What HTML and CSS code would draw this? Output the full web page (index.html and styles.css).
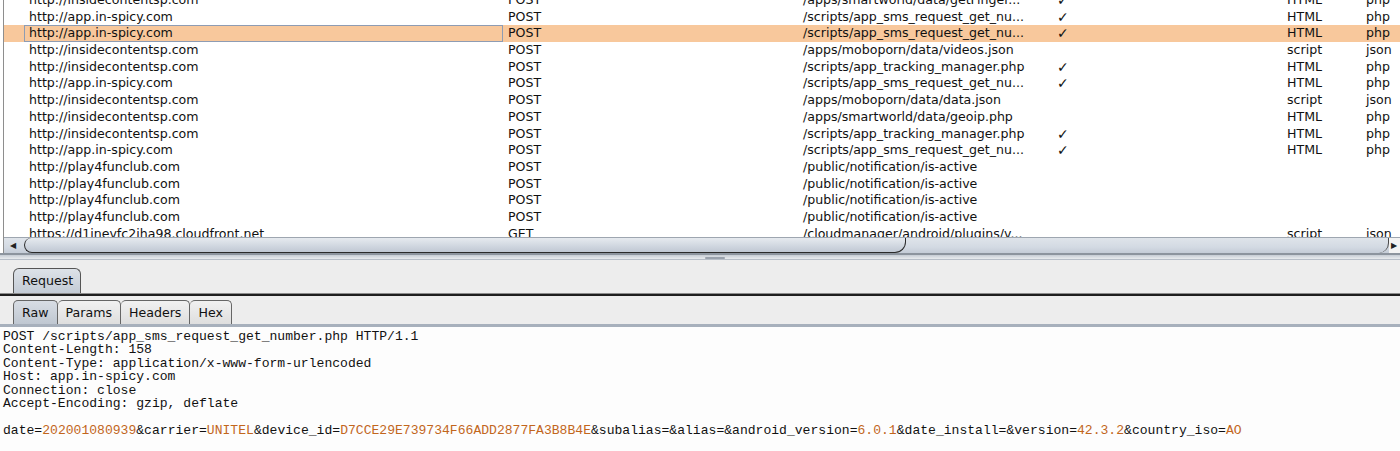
FILE: index.html
```html
<!DOCTYPE html>
<html>
<head>
<meta charset="utf-8">
<link rel="stylesheet" href="styles.css">
</head>
<body>
<div class="app">
  <div class="table-pane">
    <div class="viewport">
      <div class="rows">
        <div class="row"><span></span><span>http://insidecontentsp.com</span><span>POST</span><span>/apps/smartworld/data/getFinger...</span><span>✓</span><span>HTML</span><span>php</span></div>
        <div class="row"><span></span><span>http://app.in-spicy.com</span><span>POST</span><span>/scripts/app_sms_request_get_nu...</span><span>✓</span><span>HTML</span><span>php</span></div>
        <div class="row selected"><span></span><span class="focus">http://app.in-spicy.com</span><span>POST</span><span>/scripts/app_sms_request_get_nu...</span><span>✓</span><span>HTML</span><span>php</span></div>
        <div class="row"><span></span><span>http://insidecontentsp.com</span><span>POST</span><span>/apps/moboporn/data/videos.json</span><span></span><span>script</span><span>json</span></div>
        <div class="row"><span></span><span>http://insidecontentsp.com</span><span>POST</span><span>/scripts/app_tracking_manager.php</span><span>✓</span><span>HTML</span><span>php</span></div>
        <div class="row"><span></span><span>http://app.in-spicy.com</span><span>POST</span><span>/scripts/app_sms_request_get_nu...</span><span>✓</span><span>HTML</span><span>php</span></div>
        <div class="row"><span></span><span>http://insidecontentsp.com</span><span>POST</span><span>/apps/moboporn/data/data.json</span><span></span><span>script</span><span>json</span></div>
        <div class="row"><span></span><span>http://insidecontentsp.com</span><span>POST</span><span>/apps/smartworld/data/geoip.php</span><span></span><span>HTML</span><span>php</span></div>
        <div class="row"><span></span><span>http://insidecontentsp.com</span><span>POST</span><span>/scripts/app_tracking_manager.php</span><span>✓</span><span>HTML</span><span>php</span></div>
        <div class="row"><span></span><span>http://app.in-spicy.com</span><span>POST</span><span>/scripts/app_sms_request_get_nu...</span><span>✓</span><span>HTML</span><span>php</span></div>
        <div class="row"><span></span><span>http://play4funclub.com</span><span>POST</span><span>/public/notification/is-active</span><span></span><span></span><span></span></div>
        <div class="row"><span></span><span>http://play4funclub.com</span><span>POST</span><span>/public/notification/is-active</span><span></span><span></span><span></span></div>
        <div class="row"><span></span><span>http://play4funclub.com</span><span>POST</span><span>/public/notification/is-active</span><span></span><span></span><span></span></div>
        <div class="row"><span></span><span>http://play4funclub.com</span><span>POST</span><span>/public/notification/is-active</span><span></span><span></span><span></span></div>
        <div class="row"><span></span><span>https://d1inevfc2iha98.cloudfront.net</span><span>GET</span><span>/cloudmanager/android/plugins/v...</span><span></span><span>script</span><span>json</span></div>
      </div>
    </div>
    <div class="hscroll">
      <div class="arrow-l">◀</div>
      <div class="thumb"></div>
      <div class="track"></div>
      <div class="arrow-r">▶</div>
    </div>
  </div>
  <div class="splitter"><div class="grip"></div></div>
  <div class="lower">
    <div class="tabbar"><div class="tab selected">Request</div></div>
    <div class="subtabbar">
      <div class="subtab selected">Raw</div>
      <div class="subtab">Params</div>
      <div class="subtab">Headers</div>
      <div class="subtab">Hex</div>
    </div>
    <pre class="raw">POST /scripts/app_sms_request_get_number.php HTTP/1.1
Content-Length: 158
Content-Type: application/x-www-form-urlencoded
Host: app.in-spicy.com
Connection: close
Accept-Encoding: gzip, deflate

date=<span class="v">202001080939</span>&amp;carrier=<span class="v">UNITEL</span>&amp;device_id=<span class="v">D7CCE29E739734F66ADD2877FA3B8B4E</span>&amp;subalias=&amp;alias=&amp;android_version=<span class="v">6.0.1</span>&amp;date_install=&amp;version=<span class="v">42.3.2</span>&amp;country_iso=<span class="v">AO</span></pre>
  </div>
</div>
</body>
</html>
```

FILE: styles.css
```css
html, body {
  margin: 0;
  padding: 0;
  background: #ffffff;
}

.app {
  width: 1400px;
  height: 451px;
  overflow: hidden;
  display: flex;
  flex-direction: column;
  font-family: "DejaVu Sans", "Liberation Sans", sans-serif;
  font-size: 12.6px;
  color: #111;
}

.table-pane {
  margin-left: 3px;
  border-left: 1px solid #8e8e8e;
}

.viewport {
  height: 237px;
  overflow: hidden;
  background: #fff;
}

.rows {
  margin-top: -8px;
}

.row {
  display: grid;
  grid-template-columns: 20px 479px 295px 254px 230px 79px 1fr;
  height: 16.7px;
  line-height: 16.7px;
  white-space: nowrap;
}

.row span {
  padding-left: 5px;
  overflow: hidden;
}

.row span:nth-child(5) {
  font-size: 14px;
}

.row.selected {
  background: #f8c89c;
}

.row .focus {
  box-shadow: inset 0 0 0 1px #8e9cb3;
}

.hscroll {
  height: 15px;
  display: flex;
  align-items: stretch;
  background: linear-gradient(#dfe4ea, #d3dae3 60%, #c4ccd7);
  border-top: 1px solid #9ea6b0;
}

.arrow-l {
  width: 20px;
  font-size: 8px;
  line-height: 15px;
  padding-left: 6px;
  box-sizing: border-box;
  color: #222;
}

.thumb {
  width: 880px;
  border: 1px solid #2a2a2a;
  border-top: none;
  border-radius: 9px 0 14px 10px;
  background: linear-gradient(#e6eaef, #cfd6df 60%, #c0c8d3);
}

.track {
  flex: 1;
  border-right: 1px solid #4a4a4a;
  border-radius: 0 0 10px 0;
}

.arrow-r {
  width: 9px;
  font-size: 8px;
  line-height: 15px;
  padding-left: 2px;
  color: #222;
  background: #f3f3f3;
}

.splitter {
  height: 4px;
  border-top: 2px solid #8c949e;
  border-bottom: 1px solid #b7bec8;
  background: linear-gradient(#c6ccd4, #e9ecef);
  position: relative;
}

.grip {
  position: absolute;
  left: 705px;
  top: 2px;
  width: 20px;
  height: 2px;
  background: #9aa2ad;
  border-radius: 2px;
}

.lower {
  flex: 1;
  background: #ededed;
  display: flex;
  flex-direction: column;
}

.tabbar {
  display: flex;
  padding: 8px 0 0 13px;
  border-bottom: 1px solid #8d8d8d;
  box-shadow: 0 2px 0 #1e1e1e;
  margin-bottom: 2px;
}

.tab {
  height: 24px;
  line-height: 24px;
  padding: 0 8px;
  border: 1px solid #555;
  border-bottom: none;
  border-radius: 6px 6px 0 0;
  width: 50px;
}

.tab.selected {
  background: linear-gradient(#dde2e8, #c3cbd5);
}

.subtabbar {
  display: flex;
  padding: 4px 0 0 13px;
  border-bottom: 3px solid #a7b0bc;
}

.subtab {
  height: 23px;
  line-height: 23px;
  padding: 0 8px;
  border: 1px solid #666;
  border-bottom: none;
  border-left: none;
  border-radius: 5px 5px 0 0;
  background: linear-gradient(#f1f1f1, #dedede);
}

.subtab:first-child {
  border-left: 1px solid #666;
}

.subtab.selected {
  background: linear-gradient(#d8dde4, #bfc7d1);
}

.raw {
  flex: 1;
  margin: 0;
  padding: 3px 0 0 3px;
  background: #fdfdfd;
  font-family: "Liberation Mono", "Courier New", monospace;
  font-size: 13.07px;
  line-height: 13.4px;
  color: #111;
}

.raw .v {
  color: #c2661c;
}
```
